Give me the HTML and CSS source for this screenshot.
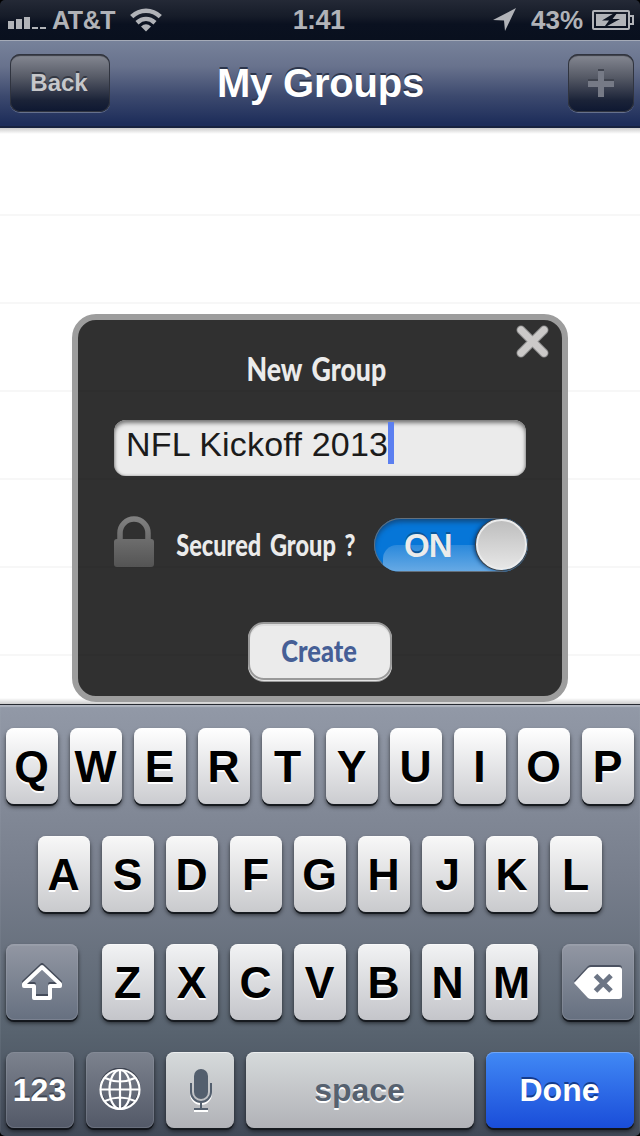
FILE: index.html
```
<!DOCTYPE html>
<html lang="en">
<head>
<meta charset="utf-8">
<title>My Groups</title>
<link rel="stylesheet" href="styles.css">
</head>
<body>
<div class="screen">
  <div class="status">
    <div class="status-left">
      <svg class="signal" width="38" height="13" viewBox="0 0 38 13"><path d="M0 5h6v8H0zM8 3h6v10H8zM16 1h6v12h-6zM24 11h6v2h-6zM32 11h6v2h-6z" fill="#b1b3b8"/></svg>
      <span class="carrier">AT&amp;T</span>
      <svg class="wifi" width="32" height="24" viewBox="0 0 32 24"><g fill="none" stroke="#b1b3b8" stroke-width="4.600"><path d="M1.7 8.7C10 .8 22 .8 30.300 8.700"/><path d="M7 14.700C12.500 9.800 19.500 9.800 25 14.700"/></g><path d="M11 18.500Q16 14 21 18.500L16 23.500z" fill="#b1b3b8"/></svg>
    </div>
    <div class="clock">1:41</div>
    <div class="status-right">
      <svg width="24" height="24" viewBox="0 0 24 24"><path d="M23 0 12 23 11 12.500 0 12z" fill="#b1b3b8"/></svg>
      <span class="percent">43%</span>
      <svg class="battery" width="42" height="20" viewBox="0 0 42 20"><rect x="1" y="1" width="36" height="18" rx="1" fill="none" stroke="#b1b3b8" stroke-width="2"/><path d="M4 4h30v12H4z" fill="#b1b3b8"/><path d="M38 6h3v8h-3" fill="none" stroke="#b1b3b8" stroke-width="2"/><path d="M24 2 10 10.500h7L11.500 18 28 9h-7.500L26 2z" fill="#0d1422"/></svg>
    </div>
  </div>
  <header class="nav">
    <button class="navbtn back">Back</button>
    <h1 class="title">My Groups</h1>
    <button class="navbtn add"><svg width="26" height="28" viewBox="0 0 26 28"><path d="M10 0h6v10h10v6H16v10h-6V16H0v-6h10z" fill="#40444f"/><path d="M10 2h6v10h10v6H16v10h-6V18H0v-6h10z" fill="#767a86"/></svg></button>
  </header>
  <main class="list">
    <section class="dialog">
      <svg class="close" width="34" height="34" viewBox="0 0 34 34"><path d="M5 5 28 28M28 5 5 28" stroke="#8a8a8a" stroke-width="9" stroke-linecap="round"/><path d="M5 5 28 28M28 5 5 28" stroke="#cbc9c8" stroke-width="7" stroke-linecap="round"/></svg>
      <div class="casual heading"><span>New Group</span></div>
      <div class="field"><span>NFL Kickoff 2013</span><i class="caret"></i></div>
      <div class="secure">
        <svg class="lock" width="42" height="52" viewBox="0 0 42 52"><defs><linearGradient id="lg" x1="0" y1="0" x2="0" y2="52" gradientUnits="userSpaceOnUse"><stop stop-color="#828282"/><stop offset="1" stop-color="#535353"/></linearGradient></defs><path d="M7 25V17a14 14 0 0 1 28 0v8" fill="none" stroke="url(#lg)" stroke-width="5.500"/><rect x="1" y="23" width="40" height="28" rx="3" fill="url(#lg)"/></svg>
        <div class="casual question"><span>Secured Group ?</span></div>
        <div class="switch"><span class="gloss"></span><span class="on">ON</span><span class="knob"></span></div>
      </div>
      <button class="create"><span class="casual"><span>Create</span></span></button>
    </section>
  </main>
  <div class="keyboard">
    <div class="row"><b class="key">Q</b><b class="key">W</b><b class="key">E</b><b class="key">R</b><b class="key">T</b><b class="key">Y</b><b class="key">U</b><b class="key">I</b><b class="key">O</b><b class="key">P</b></div>
    <div class="row r2"><b class="key">A</b><b class="key">S</b><b class="key">D</b><b class="key">F</b><b class="key">G</b><b class="key">H</b><b class="key">J</b><b class="key">K</b><b class="key">L</b></div>
    <div class="row r3">
      <b class="key fn wide"><svg width="42" height="38" viewBox="0 0 42 38"><g fill="none" stroke-width="4" stroke-linejoin="round"><path stroke="#444b59" d="M21 2 39 19v2H29v12H13V21H3v-2z"/><path stroke="#fff" d="M21 4 39 21v2H29v12H13V23H3v-2z"/></g></svg></b>
      <div class="letters"><b class="key">Z</b><b class="key">X</b><b class="key">C</b><b class="key">V</b><b class="key">B</b><b class="key">N</b><b class="key">M</b></div>
      <b class="key fn wide"><svg width="48" height="34" viewBox="0 0 48 34"><path fill="#4b5261" d="M0 16 14 1q1.500-1 3-1h28q3 0 3 3v26q0 3-3 3H17z"/><path fill="#fff" d="M0 18 14 3q1.500-1 3-1h28q3 0 3 3v26q0 3-3 3H17q-1.500 0-3-1z"/><path d="M21.500 10.500 37 26M37 10.500 21.500 26" stroke="#6c7585" stroke-width="5"/></svg></b>
    </div>
    <div class="row r4">
      <b class="key fn low small">123</b>
      <b class="key fn low"><svg width="42" height="44" viewBox="0 0 42 44"><circle cx="21" cy="20" r="19.500" fill="none" stroke-width="2" stroke="#3f4552"/><g fill="none" stroke="#fff" stroke-width="2.200"><circle cx="21" cy="21.500" r="19.500"/><ellipse cx="21" cy="21.500" rx="10.500" ry="19.500"/><path d="M21 2v39M1 21.500h40M6 10Q21 17 36 10M6 33Q21 26 36 33"/></g></svg></b>
      <b class="key light"><svg class="mic" width="24" height="44" viewBox="0 0 24 44"><path d="M2 16v9a10 10 0 0 0 20 0v-9M12 35v7M5 42h14" fill="none" stroke="#fff" stroke-width="2"/><rect x="5" y="0" width="14" height="30" rx="7" fill="#535f6e"/><path d="M2 14v9a10 10 0 0 0 20 0v-9M12 33v7M5 40h14" fill="none" stroke="#535f6e" stroke-width="2"/></svg></b>
      <b class="key light small space">space</b>
      <b class="key done small">Done</b>
    </div>
  </div>
</div>
</body>
</html>
```
FILE: styles.css
```
* { box-sizing: border-box; }
body { margin: 0; background: #000; font-family: "Liberation Sans", Arial, sans-serif; }
button { border: 0; padding: 0; font: inherit; }
svg { display: block; flex: none; }
.screen { width: 640px; height: 1136px; display: flex; flex-direction: column; overflow: hidden; border-radius: 5px; }

.status { height: 40px; display: grid; grid-template-columns: 1fr 60px 1fr; align-items: center; background: linear-gradient(#242936, #161c29 40%, #0a1120 60%, #09101e); color: #b1b3b8; font-weight: bold; }
.status-left, .status-right { display: flex; align-items: center; }
.status-left { padding-left: 8px; }
.signal { margin-top: 5px; }
.carrier { font-size: 25px; line-height: 40px; letter-spacing: -.4px; margin-left: 6px; width: 72px; }
.wifi { margin: -1px 0 0 6px; }
.clock { text-align: center; font-size: 27px; line-height: 38px; letter-spacing: -.6px; padding-right: 3px; }
.status-right { justify-content: flex-end; padding-right: 6px; margin-top: -1px; }
.percent { font-size: 26px; line-height: 40px; margin-left: 14px; width: 61px; }

.nav { height: 88px; padding: 0 6px 1px 10px; display: flex; align-items: center; justify-content: space-between; background: linear-gradient(#77829a, #68728d 30%, #3c496e 65%, #1d2d5a 97%); border-top: 1px solid #a5abb8; border-bottom: 2px solid #17223f; }
.navbtn { height: 58px; border-radius: 10px; display: flex; align-items: center; justify-content: center; background: linear-gradient(#878a94, #565a66 40%, #1b2338 80%, #0d1731); box-shadow: inset 0 0 0 1px #30343f, inset 0 2px 1px #3b3d46, 0 1px 0 #66718d; color: #c6c7ca; }
.back { width: 100px; font-size: 24px; font-weight: bold; text-shadow: 0 -2px 0 #343843; padding-right: 2px; }
.add { width: 66px; }
.title { margin: 0 0 0 -37px; font-size: 40px; line-height: 48px; letter-spacing: -.2px; color: #fff; text-shadow: 0 -2px 0 #2c354b; }

.list { height: 576px; padding: 186px 72px 0; background: linear-gradient(#0003, #0000 6px), linear-gradient(#0000 570px, #0003), repeating-linear-gradient(#fff 0 86px, #f7f7f7 86px 88px); }
.dialog { position: relative; height: 388px; border: 6px solid #9d9d9d; border-radius: 24px; background: repeating-linear-gradient(#303030 0 70px, #2e2e2e 70px 72px, #303030 72px 88px); display: flex; flex-direction: column; align-items: center; }
.close { position: absolute; right: 12px; top: 5px; }
.casual { height: 40px; display: flex; align-items: center; justify-content: center; font-family: Lato, "Noto Sans", sans-serif; font-size: 31px; line-height: 40px; font-weight: 900; color: #ebebeb; white-space: nowrap; }
.casual > span { display: block; flex: none; }
.heading { width: 140px; margin: 28px 8px 0 0; font-size: 33px; word-spacing: 4px; }
.heading > span { transform: scaleX(.81); }
.field { width: 412px; height: 56px; margin-top: 32px; border-radius: 12px; padding: 2px 12px; display: flex; background: #ebebeb; box-shadow: inset 0 3px 4px #777, inset 0 0 3px #999; font-size: 34px; line-height: 44px; letter-spacing: .2px; color: #1b1b1b; }
.caret { width: 6px; height: 42px; background: #5b7ff0; }
.secure { width: 414px; height: 56px; margin-top: 40px; display: flex; align-items: center; }
.lock { margin-top: -5px; }
.question { width: 180px; margin: 0 0 0 21px; word-spacing: 4px; }
.question > span { transform: scaleX(.76); }
.switch { position: relative; width: 154px; height: 54px; margin: 1px 0 0 18px; border-radius: 27px; display: flex; flex: none; align-items: center; justify-content: space-between; padding: 0 1px 0 30px; overflow: hidden; background: #0676d8; box-shadow: inset 0 0 0 1px #64707c, inset 0 4px 5px #114b83; }
.gloss { position: absolute; left: 9px; top: 27px; width: 120px; height: 26px; border-radius: 14px 0 0 0; background: linear-gradient(#2a89dc, #66a9e4); }
.on { position: relative; top: 1px; font-size: 33px; font-weight: bold; letter-spacing: -1px; color: #ebebeb; text-shadow: 0 -2px 0 #0b569a; }
.knob { position: relative; width: 51px; height: 51px; border-radius: 50%; border: 2px solid #ebebeb; background: linear-gradient(#bebebe, #e6e6e6); box-shadow: 0 0 0 1px #444, -2px 0 4px #063568; }
.create { width: 144px; height: 58px; margin-top: 50px; border-radius: 16px; border: 2px solid #999; background: #ebebeb; display: flex; align-items: center; justify-content: center; box-shadow: 0 1px 0 #e4e4e4, 0 2px 0 #999, inset 0 2px 0 #ddd; }
.create .casual { width: 78px; color: #465f96; margin: -2px 2px 0 0; }
.create .casual > span { transform: scaleX(.82); }

.keyboard { flex: 1; padding: 23px 6px 0; border-top: 1px solid #262a31; box-shadow: inset 0 2px 1px #afb4bf; background: linear-gradient(#9299a7, #777e8c 40%, #58636f 76%, #414957); display: flex; flex-direction: column; gap: 32px; }
.row { display: flex; gap: 12px; height: 76px; }
.r2 { justify-content: center; }
.r3 { justify-content: space-between; }
.letters { display: flex; gap: 12px; }
.key { width: 52px; height: 76px; padding: 2px 1px 0 0; border-radius: 8px; display: flex; align-items: center; justify-content: center; font-size: 44.5px; color: #000; background: linear-gradient(#fff, #cbccd0); text-shadow: 0 2px 0 #fff; box-shadow: inset 0 1px 0 #fff8, 0 2px 0 #171b20, 0 3px 4px #0009; }
.r2 .key { background: linear-gradient(#f8f8f8, #c9cacd); }
.r3 .key { background: linear-gradient(#f2f3f4, #c4c5ca); }
.row .wide { width: 72px; padding: 0; background: linear-gradient(#9297a3, #667080); box-shadow: inset 0 0 0 1px #a1a6b055, inset 0 2px 0 #a6abb555, 0 2px 0 #13171d, 0 3px 4px #0009; }
.r4 .key { width: 68px; padding: 0; }
.row .low { background: linear-gradient(#7c828e, #535968); box-shadow: inset 0 0 0 1px #969ba755, 0 2px 0 #12151b, 0 3px 4px #0009; color: #fff; text-shadow: 0 -2px 0 #3c424e; }
.row .light { background: linear-gradient(#d6dadb, #b1b2b7); color: #56616f; }
.mic { margin: 2px 0 0 1px; }
.row .small { font-size: 32px; padding-right: 1px; }
.r4 .space { width: 228px; }
.r4 .done { width: 148px; background: linear-gradient(#4189f5, #1a4dd9); color: #fff; text-shadow: 0 -2px 0 #143b8c; box-shadow: inset 0 1px 0 #72a6f5, 0 2px 0 #12151b, 0 3px 4px #0009; }
```
